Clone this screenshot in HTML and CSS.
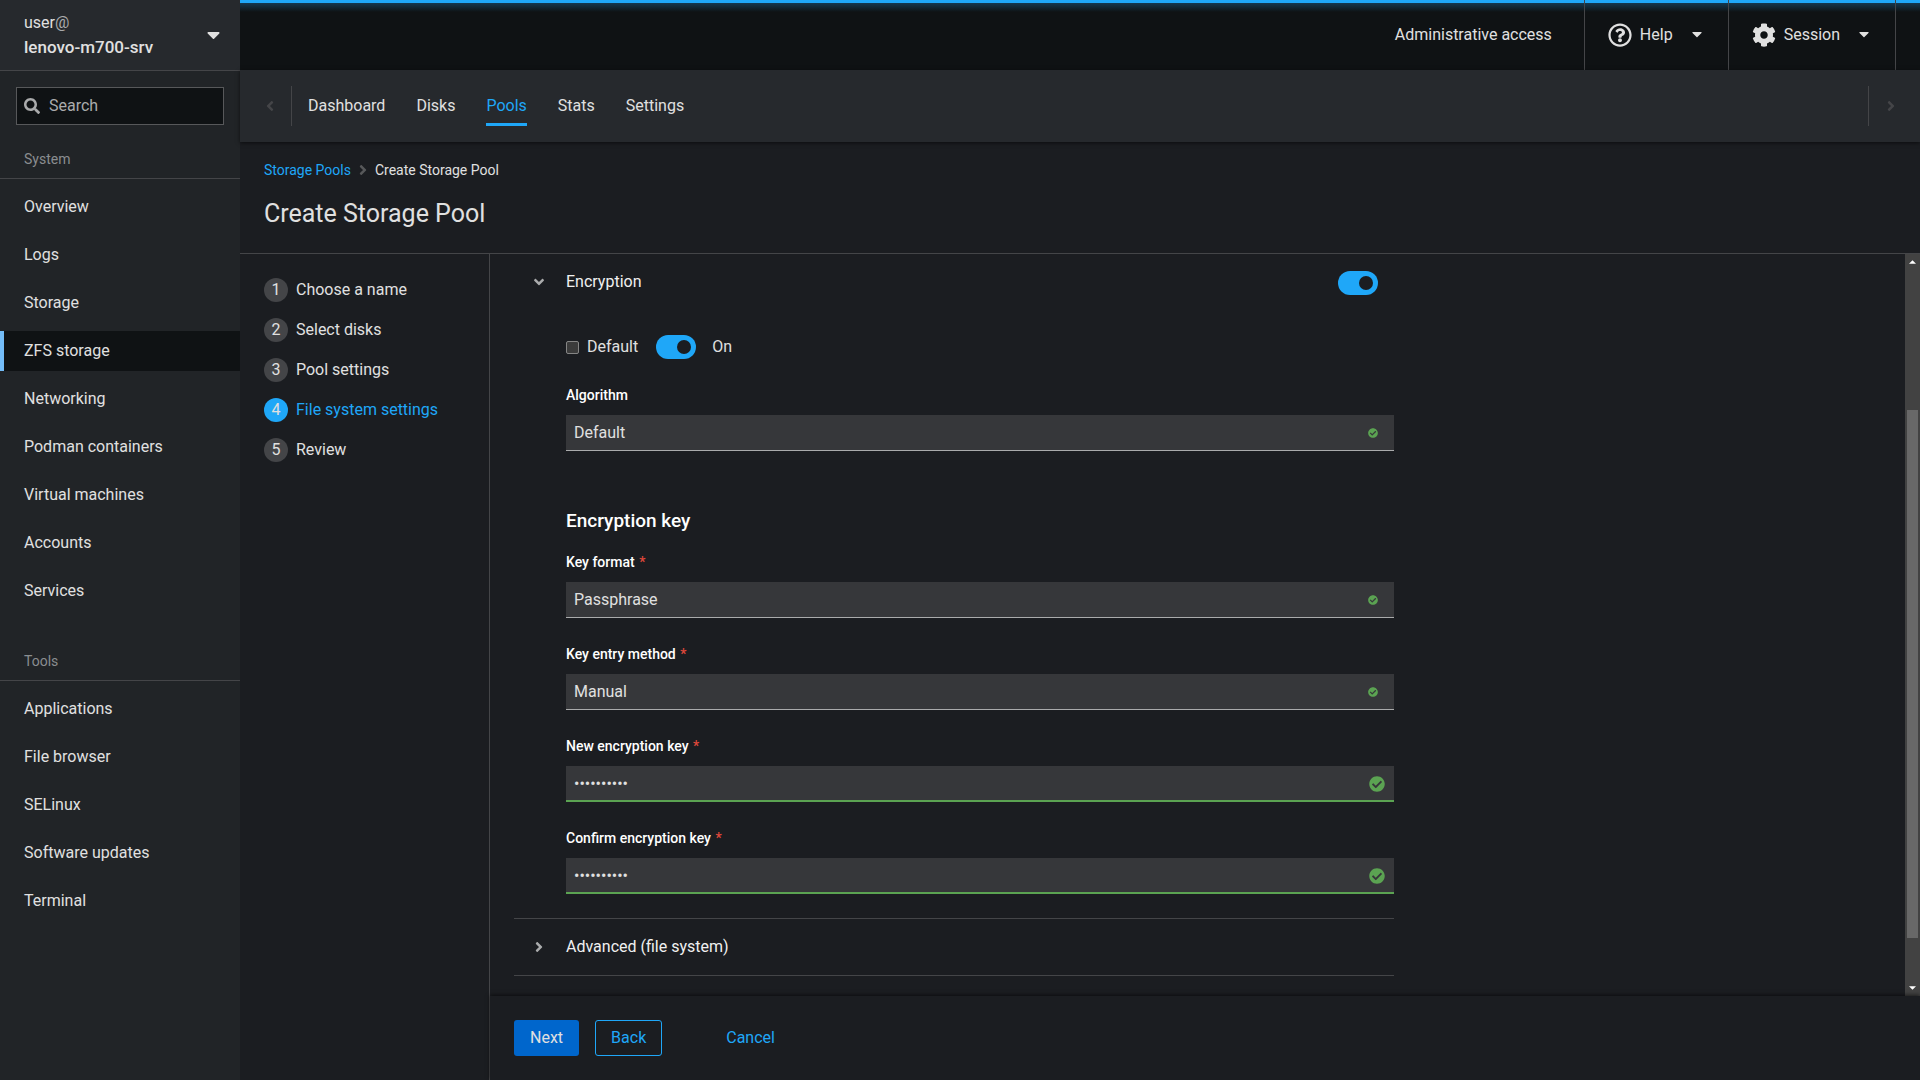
FILE: index.html
```html
<!DOCTYPE html>
<html lang="en">
<head>
    <meta charset="UTF-8">
    <meta name="viewport" content="width=device-width, initial-scale=1.0">
    <title>Create Storage Pool</title>
    <link rel="stylesheet" href="styles.css">
</head>
<body>
    <!-- Shared icons -->
    <svg class="sprite" aria-hidden="true">
        <symbol id="icon-check" viewBox="0 0 512 512">
            <path d="M504 256c0 136.967-111.033 248-248 248S8 392.967 8 256 119.033 8 256 8s248 111.033 248 248zM227.314 387.314l184-184c6.248-6.248 6.248-16.379 0-22.627l-22.627-22.627c-6.248-6.249-16.379-6.249-22.628 0L216 308.118l-70.059-70.059c-6.248-6.248-16.379-6.248-22.628 0l-22.627 22.627c-6.248 6.248-6.248 16.379 0 22.627l104 104c6.249 6.249 16.379 6.249 22.628.001z"/>
        </symbol>
        <symbol id="icon-caret" viewBox="0 0 320 192">
            <path d="M31.3 0h257.3c17.8 0 26.7 21.5 14.1 34.1L174.1 162.8c-7.8 7.8-20.5 7.8-28.3 0L17.2 34.1C4.6 21.5 13.5 0 31.3 0z"/>
        </symbol>
        <symbol id="icon-angle" viewBox="0 0 256 512">
            <path d="M224.3 273l-136 136c-9.4 9.4-24.6 9.4-33.9 0l-22.6-22.6c-9.4-9.4-9.4-24.6 0-33.9l96.4-96.4-96.4-96.4c-9.4-9.4-9.4-24.6 0-33.9L54.3 103c9.4-9.4 24.6-9.4 33.9 0l136 136c9.5 9.4 9.5 24.6.1 34z"/>
        </symbol>
    </svg>

    <div class="shell">
        <aside class="sidebar">
            <button class="host" aria-label="Switch host">
                <span class="host-text">
                    <span>user<span class="at">@</span></span>
                    <span class="host-name">lenovo-m700-srv</span>
                </span>
                <svg class="host-caret"><use href="#icon-caret"/></svg>
            </button>
            <div class="search">
                <svg class="search-icon" viewBox="0 0 512 512"><path d="M505 442.7L405.3 343c-4.5-4.5-10.6-7-17-7H372c27.6-35.3 44-79.7 44-128C416 93.1 322.9 0 208 0S0 93.1 0 208s93.1 208 208 208c48.3 0 92.7-16.4 128-44v16.3c0 6.4 2.5 12.5 7 17l99.7 99.7c9.4 9.4 24.6 9.4 33.9 0l28.3-28.3c9.4-9.4 9.4-24.6.1-34zM208 336c-70.7 0-128-57.2-128-128 0-70.7 57.2-128 128-128 70.7 0 128 57.2 128 128 0 70.7-57.2 128-128 128z"/></svg>
                <input type="search" placeholder="Search" aria-label="Search">
            </div>
            <nav class="nav-section" aria-labelledby="nav-system">
                <h2 id="nav-system">System</h2>
                <a href="#">Overview</a>
                <a href="#">Logs</a>
                <a href="#">Storage</a>
                <a href="#" class="current" aria-current="page">ZFS storage</a>
                <a href="#">Networking</a>
                <a href="#">Podman containers</a>
                <a href="#">Virtual machines</a>
                <a href="#">Accounts</a>
                <a href="#">Services</a>
            </nav>
            <nav class="nav-section" aria-labelledby="nav-tools">
                <h2 id="nav-tools">Tools</h2>
                <a href="#">Applications</a>
                <a href="#">File browser</a>
                <a href="#">SELinux</a>
                <a href="#">Software updates</a>
                <a href="#">Terminal</a>
            </nav>
        </aside>

        <main class="main">
            <header class="topbar">
                <button class="access">Administrative access</button>
                <button class="menu">
                    <svg class="menu-icon" viewBox="0 0 512 512"><path d="M256 8C119.043 8 8 119.083 8 256c0 136.997 111.043 248 248 248s248-111.003 248-248C504 119.083 392.957 8 256 8zm0 448c-110.532 0-200-89.431-200-200 0-110.495 89.472-200 200-200 110.491 0 200 89.471 200 200 0 110.53-89.431 200-200 200zm107.244-255.2c0 67.052-72.421 68.084-72.421 92.863V300c0 6.627-5.373 12-12 12h-45.647c-6.627 0-12-5.373-12-12v-8.659c0-35.745 27.1-50.034 47.579-61.516 17.561-9.845 28.324-16.541 28.324-29.579 0-17.246-21.999-28.693-39.784-28.693-23.189 0-33.894 10.977-48.942 29.969-4.057 5.12-11.46 6.071-16.666 2.124l-27.824-21.098c-5.107-3.872-6.251-11.066-2.644-16.363C184.846 131.491 214.94 112 261.794 112c49.071 0 101.45 38.304 101.45 88.8zM298 368c0 23.159-18.841 42-42 42s-42-18.841-42-42 18.841-42 42-42 42 18.841 42 42z"/></svg>
                    <span>Help</span>
                    <svg class="menu-caret"><use href="#icon-caret"/></svg>
                </button>
                <button class="menu">
                    <svg class="menu-icon" viewBox="0 0 512 512"><path d="M487.4 315.7l-42.600-24.600c4.300-23.200 4.300-47 0-70.200l42.600-24.600c4.900-2.800 7.100-8.600 5.500-14-11.100-35.600-30-67.800-54.700-94.600-3.800-4.100-10-5.100-14.800-2.300L380.800 110c-17.900-15.400-38.500-27.300-60.800-35.100V25.800c0-5.600-3.900-10.500-9.400-11.700-36.700-8.200-74.300-7.800-109.200 0-5.500 1.200-9.400 6.100-9.400 11.700V75c-22.200 7.900-42.800 19.800-60.800 35.100L88.700 85.500c-4.900-2.800-11-1.900-14.800 2.300-24.700 26.700-43.600 58.900-54.700 94.600-1.700 5.400.6 11.200 5.500 14L67.300 221c-4.300 23.200-4.300 47 0 70.200l-42.600 24.600c-4.900 2.800-7.100 8.600-5.500 14 11.100 35.600 30 67.800 54.700 94.600 3.800 4.100 10 5.100 14.800 2.300l42.600-24.600c17.900 15.400 38.500 27.300 60.800 35.100v49.200c0 5.600 3.900 10.500 9.400 11.700 36.700 8.200 74.300 7.800 109.200 0 5.500-1.200 9.400-6.100 9.400-11.700v-49.200c22.200-7.900 42.800-19.800 60.800-35.100l42.600 24.600c4.900 2.800 11 1.900 14.800-2.300 24.700-26.700 43.600-58.900 54.700-94.600 1.500-5.500-.7-11.300-5.600-14.100zM256 336c-44.100 0-80-35.900-80-80s35.900-80 80-80 80 35.900 80 80-35.900 80-80 80z"/></svg>
                    <span>Session</span>
                    <svg class="menu-caret"><use href="#icon-caret"/></svg>
                </button>
            </header>

            <div class="tabs">
                <button class="tabs-scroll tabs-scroll-left" aria-label="Scroll left" disabled><svg class="angle angle-left"><use href="#icon-angle"/></svg></button>
                <nav class="tabs-list" aria-label="ZFS">
                    <a href="#">Dashboard</a>
                    <a href="#">Disks</a>
                    <a href="#" class="current" aria-current="page">Pools</a>
                    <a href="#">Stats</a>
                    <a href="#">Settings</a>
                </nav>
                <button class="tabs-scroll tabs-scroll-right" aria-label="Scroll right" disabled><svg class="angle"><use href="#icon-angle"/></svg></button>
            </div>

            <div class="page-header">
                <nav class="breadcrumb" aria-label="Breadcrumb">
                    <a href="#">Storage Pools</a>
                    <svg class="angle"><use href="#icon-angle"/></svg>
                    <span>Create Storage Pool</span>
                </nav>
                <h1>Create Storage Pool</h1>
            </div>

            <div class="wizard">
                <nav class="steps" aria-label="Steps">
                    <a href="#"><span class="step-number">1</span>Choose a name</a>
                    <a href="#"><span class="step-number">2</span>Select disks</a>
                    <a href="#"><span class="step-number">3</span>Pool settings</a>
                    <a href="#" class="current" aria-current="step"><span class="step-number">4</span>File system settings</a>
                    <a href="#"><span class="step-number">5</span>Review</a>
                </nav>

                <form class="wizard-main">
                    <div class="wizard-scroll">
                        <div class="wizard-body">
                            <section class="group">
                                <div class="group-header">
                                    <button type="button" class="group-toggle" aria-expanded="true">
                                        <svg class="angle angle-down"><use href="#icon-angle"/></svg>
                                        <span>Encryption</span>
                                    </button>
                                    <input type="checkbox" class="switch" aria-label="Enable encryption" checked>
                                </div>
                                <div class="group-body">
                                    <div class="inline-row">
                                        <label class="check"><input type="checkbox">Default</label>
                                        <label class="switch-label"><input type="checkbox" class="switch" checked>On</label>
                                    </div>
                                    <div class="field">
                                        <label for="algorithm">Algorithm</label>
                                        <div class="control">
                                            <select id="algorithm"><option>Default</option></select>
                                            <svg class="valid valid-small"><use href="#icon-check"/></svg>
                                        </div>
                                    </div>
                                    <h2>Encryption key</h2>
                                    <div class="field">
                                        <label for="key-format">Key format <span class="required">*</span></label>
                                        <div class="control">
                                            <select id="key-format"><option>Passphrase</option></select>
                                            <svg class="valid valid-small"><use href="#icon-check"/></svg>
                                        </div>
                                    </div>
                                    <div class="field">
                                        <label for="key-method">Key entry method <span class="required">*</span></label>
                                        <div class="control">
                                            <select id="key-method"><option>Manual</option></select>
                                            <svg class="valid valid-small"><use href="#icon-check"/></svg>
                                        </div>
                                    </div>
                                    <div class="field">
                                        <label for="new-key">New encryption key <span class="required">*</span></label>
                                        <div class="control">
                                            <input type="password" id="new-key" value="passphrase">
                                            <svg class="valid"><use href="#icon-check"/></svg>
                                        </div>
                                    </div>
                                    <div class="field">
                                        <label for="confirm-key">Confirm encryption key <span class="required">*</span></label>
                                        <div class="control">
                                            <input type="password" id="confirm-key" value="passphrase">
                                            <svg class="valid"><use href="#icon-check"/></svg>
                                        </div>
                                    </div>
                                </div>
                            </section>
                            <section class="group group-collapsed">
                                <button type="button" class="group-toggle" aria-expanded="false">
                                    <svg class="angle"><use href="#icon-angle"/></svg>
                                    <span>Advanced (file system)</span>
                                </button>
                            </section>
                        </div>
                        <div class="scrollbar" aria-hidden="true">
                            <svg class="scroll-arrow" viewBox="0 0 8 4"><path d="M4 0l4 4H0z"/></svg>
                            <div class="scroll-track"><div class="scroll-thumb"></div></div>
                            <svg class="scroll-arrow" viewBox="0 0 8 4"><path d="M0 0h8L4 4z"/></svg>
                        </div>
                    </div>
                    <footer class="wizard-footer">
                        <button type="button" class="btn btn-primary">Next</button>
                        <button type="button" class="btn btn-secondary">Back</button>
                        <button type="button" class="btn btn-link">Cancel</button>
                    </footer>
                </form>
            </div>
        </main>
    </div>
</body>
</html>
```
FILE: styles.css
```css
* {
    box-sizing: border-box;
}
body {
    margin: 0;
    font-family: Roboto, "Liberation Sans", sans-serif;
    font-size: 16px;
    line-height: 24px;
    color: #e0e0e0;
    background: #1b1d21;
}
a {
    color: inherit;
    text-decoration: none;
}
button, input, select {
    margin: 0;
    font: inherit;
    color: inherit;
}
button {
    padding: 0;
    border: none;
    background: none;
    cursor: pointer;
}
h1, h2 {
    margin: 0;
    font-weight: 400;
}
svg {
    display: block;
    flex: none;
    fill: currentColor;
}
.sprite {
    display: none;
}
.shell {
    display: flex;
    height: 100vh;
    overflow: hidden;
}

/* Sidebar */
.sidebar {
    flex: none;
    width: 240px;
    background: #212427;
}
.host {
    display: flex;
    align-items: center;
    justify-content: space-between;
    width: 100%;
    height: 71px;
    padding: 0 20px 0 24px;
    border-bottom: 1px solid #444548;
    background: #26292d;
    text-align: left;
}
.host-text {
    display: flex;
    flex-direction: column;
}
.host-name {
    font-size: 17px;
    font-weight: 500;
}
.at {
    color: #aaabac;
}
.host-caret {
    width: 13px;
    height: 8px;
    margin-top: 2px;
}
.search {
    display: flex;
    align-items: center;
    gap: 9px;
    height: 38px;
    margin: 16px 16px 24px;
    padding: 0 7px;
    border: 1px solid #57585a;
    background: #0f1214;
    color: #aaabac;
}
.search-icon {
    width: 16px;
    height: 16px;
}
.search input {
    flex: 1;
    min-width: 0;
    padding: 0;
    border: none;
    outline: none;
    background: none;
}
.search input::placeholder {
    color: #aaabac;
    opacity: 1;
}
.nav-section {
    display: flex;
    flex-direction: column;
    gap: 8px;
    margin-bottom: 40px;
}
.nav-section h2 {
    padding: 0 24px 8px;
    border-bottom: 1px solid #444548;
    font-size: 14px;
    line-height: 21px;
    color: #8a8d90;
}
.nav-section a {
    padding: 8px 20px;
    border-left: 4px solid transparent;
}
.nav-section .current {
    border-left-color: #73bcf7;
    background: #0f1214;
}

/* Top bar */
.main {
    display: flex;
    flex: 1;
    flex-direction: column;
    min-width: 0;
}
.topbar {
    display: flex;
    flex: none;
    justify-content: flex-end;
    height: 70px;
    padding-right: 24px;
    background: linear-gradient(#1fa7f8 3px, #14384f 3px, #0f1214 12px);
}
.access {
    padding: 0 32px;
}
.menu {
    display: flex;
    align-items: center;
    padding: 0 26px 0 23px;
    border-left: 1px solid #444548;
}
.menu:last-child {
    border-right: 1px solid #444548;
}
.menu-icon {
    width: 24px;
    height: 24px;
    margin-right: 8px;
}
.menu-caret {
    width: 10px;
    height: 6px;
    margin-left: 19px;
}

/* Tabs */
.tabs {
    position: relative;
    display: flex;
    flex: none;
    padding: 16px 0;
    background: #26292d;
    box-shadow: 0 1px 4px rgba(0,0,0,0.6);
}
.tabs-scroll {
    display: flex;
    align-items: center;
    justify-content: center;
    width: 52px;
    color: #444548;
}
.tabs-scroll-left {
    padding-left: 8px;
    border-right: 1px solid #444548;
}
.tabs-scroll-right {
    padding-right: 8px;
    border-left: 1px solid #444548;
}
.tabs-list {
    display: flex;
    flex: 1;
    gap: 31px;
    padding-left: 16px;
}
.tabs-list a {
    padding: 8px 0 5px;
    border-bottom: 3px solid transparent;
}
.tabs-list .current {
    border-bottom-color: #1fa7f8;
    color: #1fa7f8;
}
.angle {
    width: 8px;
    height: 16px;
}
.angle-left {
    transform: rotate(180deg);
}
.angle-down {
    transform: rotate(90deg);
}

/* Page header */
.page-header {
    flex: none;
    padding: 16px 24px 24px;
    border-bottom: 1px solid #444548;
}
.breadcrumb {
    display: flex;
    align-items: center;
    gap: 8px;
    margin-bottom: 16px;
    font-size: 14px;
}
.breadcrumb a {
    color: #1fa7f8;
}
.breadcrumb .angle {
    color: #57585a;
}
h1 {
    font-size: 25px;
    line-height: 31px;
}

/* Wizard */
.wizard {
    display: flex;
    flex: 1;
    min-height: 0;
}
.steps {
    display: flex;
    flex: none;
    flex-direction: column;
    gap: 16px;
    width: 250px;
    padding: 24px;
    border-right: 1px solid #444548;
}
.steps a {
    display: flex;
    gap: 8px;
}
.step-number {
    width: 24px;
    border-radius: 50%;
    background: #444548;
    text-align: center;
}
.steps .current {
    color: #1fa7f8;
}
.steps .current .step-number {
    background: #1fa7f8;
    color: #e0e0e0;
}
.wizard-main {
    display: flex;
    flex: 1;
    flex-direction: column;
    min-width: 0;
}
.wizard-scroll {
    display: flex;
    flex: 1;
    min-height: 0;
}
.wizard-body {
    flex: 1;
    padding: 16px 24px;
    overflow: hidden;
}
.group {
    max-width: 880px;
    border-bottom: 1px solid #444548;
}
.group-header {
    display: flex;
    align-items: flex-end;
    justify-content: space-between;
    height: 25px;
    padding-right: 16px;
}
.group-toggle {
    display: flex;
    align-items: center;
    gap: 23px;
    padding-left: 21px;
    color: #f0f0f0;
}
.group-header .group-toggle {
    align-self: flex-start;
}
.group-toggle .angle {
    color: #aaabac;
}
.group-collapsed {
    padding: 16px 0;
}
.group-body {
    padding: 40px 0 24px 52px;
}
.group h2 {
    margin: 56px 0 16px;
    font-size: 19px;
    line-height: 27px;
    font-weight: 500;
    color: #fff;
}
.inline-row {
    display: flex;
    align-items: center;
    gap: 18px;
    margin-bottom: 24px;
}
.check {
    display: flex;
    align-items: center;
    gap: 8px;
}
.check input {
    width: 13px;
    height: 13px;
    border: 1px solid #858585;
    border-radius: 2px;
    appearance: none;
    background: #3b3b3b;
}
.switch {
    display: flex;
    align-items: center;
    justify-content: flex-end;
    width: 40px;
    height: 24px;
    padding: 0 5px;
    border-radius: 12px;
    appearance: none;
    background: #1fa7f8;
}
.switch::before {
    content: "";
    width: 14px;
    height: 14px;
    border-radius: 50%;
    background: #1b1d21;
}
.switch-label {
    display: flex;
    gap: 16px;
}
.field {
    margin-bottom: 24px;
}
.field label {
    display: block;
    margin-bottom: 8px;
    font-size: 14px;
    font-weight: 500;
    color: #fff;
}
.required {
    margin-left: 1px;
    color: #e0483b;
}
.field:last-child {
    margin-bottom: 0;
}
.control {
    position: relative;
}
.control select, .control input {
    display: block;
    width: 100%;
    height: 36px;
    padding: 0 32px 0 8px;
    border: none;
    border-bottom: 1px solid #aaabac;
    border-radius: 0;
    outline: none;
    appearance: none;
    background: #36373a;
}
.control input {
    border-bottom: 2px solid #5ba352;
}
.valid {
    position: absolute;
    top: 10px;
    right: 9px;
    width: 16px;
    height: 16px;
    color: #5ba352;
    pointer-events: none;
}
.valid-small {
    top: 13px;
    right: 16px;
    width: 10px;
    height: 10px;
}

/* Scrollbar */
.scrollbar {
    display: flex;
    flex: none;
    flex-direction: column;
    width: 15px;
    padding: 6px 2px;
    background: #424242;
}
.scroll-arrow {
    width: 7px;
    height: 4px;
    margin: 0 auto;
    fill: #fff;
}
.scroll-track {
    display: flex;
    flex: 1;
    flex-direction: column;
    justify-content: flex-end;
    padding: 5px 0 48px;
}
.scroll-thumb {
    height: 79%;
    background: #686868;
}

/* Footer */
.wizard-footer {
    position: relative;
    display: flex;
    gap: 16px;
    padding: 24px;
    background: #1b1d21;
    box-shadow: 0 -1px 4px rgba(0,0,0,0.6);
}
.btn {
    height: 36px;
    padding: 0 15px;
    border: 1px solid transparent;
    border-radius: 3px;
}
.btn-primary {
    background: #06c;
}
.btn-secondary {
    border-color: #1fa7f8;
    color: #1fa7f8;
}
.btn-link {
    margin-left: 32px;
    color: #1fa7f8;
}
```
